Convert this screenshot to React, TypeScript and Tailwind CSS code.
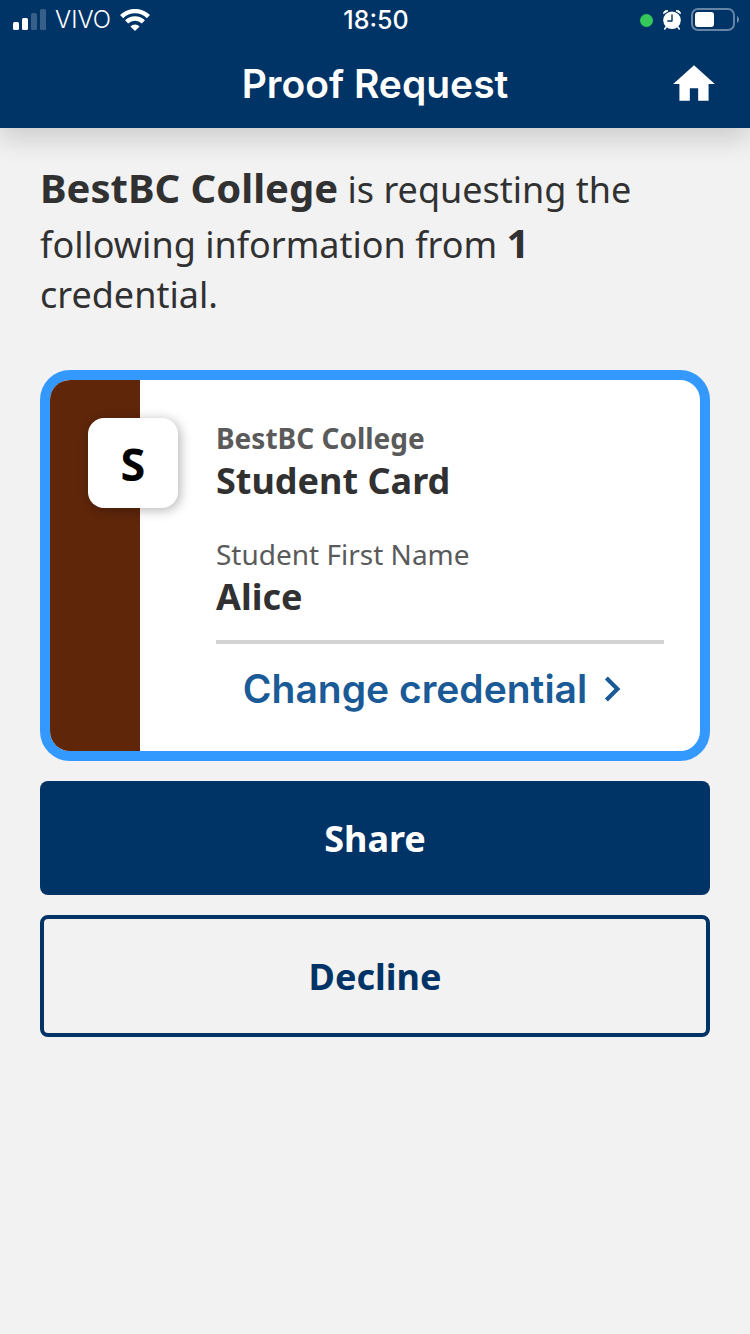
import React from "react";

function SignalIcon() {
  return (
    <svg viewBox="0 0 33 22" className="h-[22px] w-[33px]" fill="#fff" aria-hidden="true">
      <rect x="0" y="13" width="6" height="8" rx="1.5" />
      <rect x="9" y="9" width="6" height="12" rx="1.5" />
      <rect x="18" y="4" width="6" height="17" rx="1.5" opacity="0.22" />
      <rect x="27" y="0" width="6" height="21" rx="1.5" opacity="0.22" />
    </svg>
  );
}

function WifiIcon() {
  return (
    <svg viewBox="0 0 30 22" className="h-[22px] w-[30px]" aria-hidden="true">
      <g fill="none" stroke="#fff" strokeWidth="4.4">
        <path d="M1.6 7.6a19 19 0 0 1 26.8 0" />
        <path d="M6.6 12.9a11.9 11.9 0 0 1 16.8 0" />
      </g>
      <path d="M15 22l-4.6-4.6a6.5 6.5 0 0 1 9.2 0z" fill="#fff" />
    </svg>
  );
}

function AlarmIcon() {
  return (
    <svg viewBox="0 0 18 20" className="h-5 w-[18px]" aria-hidden="true">
      <path d="M0.6 3.6A3 3 0 0 1 5 0.8zM17.4 3.6A3 3 0 0 0 13 0.8z" fill="#fff" stroke="#fff" strokeLinejoin="round" />
      <path d="M3.5 16.5l-1.8 2.4M14.5 16.5l1.8 2.4" stroke="#fff" strokeWidth="1.6" strokeLinecap="round" />
      <circle cx="9" cy="10.2" r="8.8" fill="#fff" />
      <path d="M9 5v6H4.8" fill="none" stroke="#003366" strokeWidth="1.4" strokeLinecap="round" strokeLinejoin="round" />
    </svg>
  );
}

function BatteryIcon() {
  return (
    <svg viewBox="0 0 48 24" className="h-6 w-12" aria-hidden="true">
      <rect x="1" y="1" width="42" height="21" rx="6" fill="none" stroke="#fff" strokeOpacity="0.4" strokeWidth="2" />
      <rect x="4" y="4" width="19" height="15" rx="3" fill="#fff" />
      <path d="M46 8c2.6 1.5 2.6 5.5 0 7z" fill="#fff" fillOpacity="0.45" />
    </svg>
  );
}

function StatusBar() {
  return (
    <div className="grid h-10 grid-cols-[1fr_auto_1fr] items-center pr-[11px] pl-[13px] font-['Inter',sans-serif] text-[24px] leading-none">
      <div className="flex items-center gap-[9px]">
        <SignalIcon />
        <span className="font-light">VIVO</span>
        <WifiIcon />
      </div>
      <span className="text-[25px] font-medium">18:50</span>
      <div className="flex items-center justify-end gap-2.5">
        <span className="size-[13px] rounded-full bg-[#34c759]" />
        <AlarmIcon />
        <BatteryIcon />
      </div>
    </div>
  );
}

function Header() {
  return (
    <header className="relative bg-[#003366] text-white shadow-[0_12px_24px_rgba(0,0,0,0.15)]">
      <StatusBar />
      <div className="grid h-[88px] grid-cols-[1fr_auto_1fr] items-center px-[31px]">
        <h1 className="col-start-2 font-['Inter',sans-serif] text-[39px] leading-[38px] font-semibold">Proof Request</h1>
        <button type="button" aria-label="Home" className="justify-self-end">
          <svg viewBox="0 0 24 24" className="size-[50px]" fill="currentColor" aria-hidden="true">
            <path d="M10 20v-6h4v6h5v-8h3L12 3 2 12h3v8z" />
          </svg>
        </button>
      </div>
    </header>
  );
}

function CredentialCard() {
  return (
    <section className="flex overflow-hidden rounded-[30px] border-[10px] border-[#3399ff] bg-white">
      <div className="w-[90px] shrink-0 bg-[#5f260a] pt-[38px] pl-[38px]">
        <div className="flex size-[90px] items-center justify-center rounded-2xl bg-white text-[45px] leading-none font-bold text-black shadow-[2px_2px_12px_rgba(0,0,0,0.3)]">
          S
        </div>
      </div>
      <div className="flex-1 pt-[38px] pr-9 pb-[37px] pl-[76px]">
        <p className="text-[28px] leading-[40px] font-bold text-[#5a5a5b]">BestBC College</p>
        <h2 className="text-[36px] leading-[46px] font-bold">Student Card</h2>
        <dl className="mt-[30px] border-b-4 border-[#d3d3d3] pb-5">
          <dt className="text-[28px] leading-[40px] text-[#5a5a5b]">Student First Name</dt>
          <dd className="text-[36px] leading-[46px] font-bold">Alice</dd>
        </dl>
        <button
          type="button"
          className="mt-5 flex w-full items-center justify-center font-['Inter',sans-serif] text-[39px] leading-[38px] font-semibold whitespace-nowrap text-[#1a5a96]"
        >
          Change credential
          <svg viewBox="0 0 24 24" className="size-[50px] shrink-0" fill="currentColor" aria-hidden="true">
            <path d="M10 6L8.59 7.41 13.17 12l-4.58 4.59L10 18l6-6z" />
          </svg>
        </button>
      </div>
    </section>
  );
}

export default function App() {
  return (
    <div className="min-h-screen bg-[#f2f2f2] font-['Noto_Sans',sans-serif] leading-[normal] text-[#313132]">
      <Header />
      <main className="px-10 pt-8 pb-10">
        <p className="mb-[51px] text-[36px] leading-[normal]">
          <strong className="text-[40px] font-bold">BestBC College</strong> is requesting the following information from{" "}
          <strong className="text-[40px] font-bold">1</strong> credential.
        </p>
        <CredentialCard />
        <div className="mt-5 flex flex-col gap-5 text-[36px] leading-[50px] font-bold">
          <button type="button" className="rounded-lg bg-[#003366] pt-[33px] pb-[31px] text-white">
            Share
          </button>
          <button type="button" className="rounded-lg border-4 border-[#003366] pt-[33px] pb-[31px] text-[#003366]">
            Decline
          </button>
        </div>
      </main>
    </div>
  );
}
